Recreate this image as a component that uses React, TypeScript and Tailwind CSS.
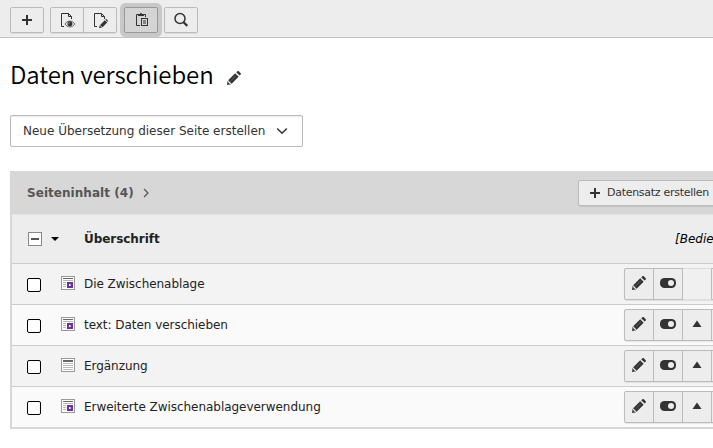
import type { ReactNode } from "react";
import clsx from "clsx";

type Row = {
  title: string;
  kind: "media" | "text";
  movable: boolean;
};

const ROWS: Row[] = [
  { title: "Die Zwischenablage", kind: "media", movable: false },
  { title: "text: Daten verschieben", kind: "media", movable: true },
  { title: "Ergänzung", kind: "text", movable: true },
  { title: "Erweiterte Zwischenablageverwendung", kind: "media", movable: true },
];

function PlusIcon({ className }: { className?: string }) {
  return (
    <svg viewBox="0 0 16 16" className={clsx("h-4 w-4 shrink-0", className)} fill="#333">
      <path d="M7 3h2v4h4v2H9v4H7V9H3V7h4z" />
    </svg>
  );
}

function PencilIcon({ className }: { className?: string }) {
  return (
    <svg viewBox="0 0 16 16" className={clsx("h-4 w-4 shrink-0", className)} fill="#333">
      <path d="M9.200 3.300 12.600 6.700 5.600 13.700 2.200 10.300z" />
      <path d="m10.300 2.400 1.100-1.100c.4-.4 1-.4 1.400 0l1.900 1.900c.4.4.4 1 0 1.400l-1 1z" />
      <path d="M1.700 10.600 2.500 12.500l.9.9 1.900.8L1 15z" />
      <path d="m4.700 10.900 5.200-5.100" stroke="#888" strokeWidth=".5" fill="none" />
    </svg>
  );
}

function ToggleIcon() {
  return (
    <svg viewBox="0 0 16 16" className="h-4 w-4 shrink-0">
      <rect y="3" width="16" height="10" rx="4.500" fill="#333" />
      <circle cx="11" cy="8" r="3" fill="#ededed" />
    </svg>
  );
}

function UpIcon() {
  return (
    <svg viewBox="0 0 16 16" className="h-4 w-4 shrink-0" fill="#333">
      <path d="M8 4.500 12.500 11h-9z" />
    </svg>
  );
}

function PageIcon({ children }: { children: ReactNode }) {
  return (
    <svg viewBox="0 0 16 16" className="h-4 w-4 shrink-0" fill="none">
      <path d="M5 14.500H2.500v-13H9.500L12.500 4.500V7" stroke="#333" />
      <path d="M9.500 1.500v3h3" stroke="#333" />
      {children}
    </svg>
  );
}

function ViewPageIcon() {
  return (
    <PageIcon>
      <path d="M6 12c1.200-1.900 2.800-2.900 4.900-2.900s3.600 1 4.800 2.900c-1.200 1.900-2.700 2.900-4.800 2.900S7.200 13.900 6 12z" stroke="#555" strokeWidth=".9" />
      <circle cx="10.900" cy="11.700" r="2.500" fill="#333" />
      <circle cx="10" cy="11" r=".6" fill="#ededed" />
    </PageIcon>
  );
}

function EditPageIcon() {
  return (
    <PageIcon>
      <path d="m12.800 8.300 2.400 2.200-4.700 4.700-2.400-2.200z" fill="#333" />
      <path d="m13.300 7.800 1-1 1.700 2.100-.5 1z" fill="#333" />
      <path d="m7.700 13.300 2.400 2.200-3 .4z" fill="#333" />
    </PageIcon>
  );
}

function ClipboardIcon() {
  return (
    <svg viewBox="0 0 16 16" className="h-4 w-4 shrink-0" fill="none">
      <path d="M7 13.500H3.500v-11H5M11 2.500h1.500V5" stroke="#333" />
      <path d="M5 2h2c0-1.300 2-1.300 2 0h2v2H5z" fill="#333" />
      <rect x="8.500" y="6.500" width="6" height="7" stroke="#333" />
      <path d="M10 9h3M10 11h3" stroke="#333" />
    </svg>
  );
}

function SearchIcon() {
  return (
    <svg viewBox="0 0 16 16" className="h-4 w-4 shrink-0" fill="none" stroke="#333">
      <circle cx="7" cy="6.500" r="5" strokeWidth="1.500" />
      <path d="m10.600 10.200 3.700 3.700" strokeWidth="2.200" />
    </svg>
  );
}

function RecordIcon({ kind }: { kind: Row["kind"] }) {
  return (
    <svg viewBox="0 0 14 14" className="h-3.5 w-3.5 shrink-0" shapeRendering="crispEdges">
      <rect x=".5" y=".5" width="13" height="13" fill="#fff" stroke="#999" />
      {kind === "media" ? (
        <>
          <path d="M2 2.500h10" stroke="#666" />
          <path d="M2 4.500h10M2 6.500h3M2 8.500h3M2 10.500h3" stroke="#b9b9b9" />
          <rect x="6" y="6" width="6" height="6" fill="#663399" />
          <path d="M8 8h1v2H8z" fill="#fff" />
          <path d="M9 8h1v2H9z" fill="#c2addb" />
        </>
      ) : (
        <>
          <path d="M2 3h10" stroke="#666" strokeWidth="2" />
          <path d="M2 5.500h10M2 7.500h10M2 9.500h10M2 11.500h10" stroke="#b9b9b9" />
        </>
      )}
    </svg>
  );
}

function ToolButton({ children, className }: { children: ReactNode; className?: string }) {
  return (
    <button
      className={clsx(
        "flex h-[26px] w-[34px] items-center justify-center border border-[#bbb] shadow-[0_1px_1px_rgba(0,0,0,0.08)]",
        className
      )}
    >
      {children}
    </button>
  );
}

function Toolbar() {
  return (
    <div className="flex h-[38px] shrink-0 items-start border-b border-[#c3c3c3] bg-[#ededed] pt-[7px] pl-2.5">
      <ToolButton className="rounded-xs">
        <PlusIcon />
      </ToolButton>
      <div className="ml-1.5 flex">
        <ToolButton className="rounded-l-xs">
          <ViewPageIcon />
        </ToolButton>
        <ToolButton className="-ml-px rounded-r-xs">
          <EditPageIcon />
        </ToolButton>
      </div>
      <button className="ml-[7px] flex h-[26px] w-[34px] items-center justify-center rounded-xs border border-[#999] bg-[#d4d4d4] shadow-[0_0_0_4px_#c8c8c8]">
        <ClipboardIcon />
      </button>
      <ToolButton className="ml-1.5 rounded-xs">
        <SearchIcon />
      </ToolButton>
    </div>
  );
}

function RowActions({ movable }: { movable: boolean }) {
  const cell = "flex w-[29px] shrink-0 items-center justify-center border-r border-[#bbb] pb-0.5";
  return (
    <div className="flex h-8 w-[118px] shrink-0 rounded-l-xs border border-[#bbb] bg-[#ededed] shadow-[0_1px_1px_rgba(0,0,0,0.08)]">
      <div className={cell}>
        <PencilIcon />
      </div>
      <div className={cell}>
        <ToggleIcon />
      </div>
      <div className={clsx(cell, !movable && "-my-px border-y border-y-[#ddd] bg-[#f0f0f0]")}>
        {movable && <UpIcon />}
      </div>
    </div>
  );
}

export default function App() {
  return (
    <div className="flex h-[448px] w-[713px] flex-col overflow-hidden bg-white font-['DejaVu_Sans',sans-serif] text-[12px] text-[#222]">
      <Toolbar />

      <div className="ml-2.5 flex h-[77px] shrink-0 items-center">
        <h1 className="mb-[5px] w-[216px] font-['Noto_Sans_CJK_SC',sans-serif] text-[24px] leading-[30px] font-[350] tracking-[-0.09px] whitespace-nowrap text-black">
          Daten verschieben
        </h1>
        <PencilIcon className="mt-0.5" />
      </div>

      <button className="ml-2.5 flex h-8 w-[293px] shrink-0 items-center rounded-xs border border-[#bbb] pl-3 whitespace-nowrap text-[#333] shadow-[inset_0_1px_1px_rgba(0,0,0,0.08)]">
        <span className="w-[251px] text-left">Neue Übersetzung dieser Seite erstellen</span>
        <svg viewBox="0 0 16 16" className="h-4 w-4 shrink-0" fill="none" stroke="#333" strokeWidth="1.500">
          <path d="m3.200 5.500 4.800 4.800 4.800-4.800" />
        </svg>
      </button>

      <div className="mt-6 ml-2.5 flex w-[760px] flex-col border-2 border-t-0 border-[#d7d7d7]">
        <div className="flex h-[43px] items-center bg-[#d7d7d7] pl-[15px] text-[#555]">
          <span className="w-[107px] font-bold tracking-[0.05px] whitespace-nowrap">Seiteninhalt (4)</span>
          <svg viewBox="0 0 8 12" className="ml-2 h-3 w-2" fill="none" stroke="#555" strokeWidth="1.200">
            <path d="m2 2 4 4-4 4" />
          </svg>
          <button className="ml-auto flex h-[26px] w-[190px] items-center rounded-xs border border-[#bbb] bg-[#ededed] pl-2 text-[11px] whitespace-nowrap text-[#333] shadow-[0_1px_1px_rgba(0,0,0,0.08)]">
            <PlusIcon />
            <span className="mt-0.5 ml-1 tracking-[-0.28px]">Datensatz erstellen</span>
          </button>
        </div>

        <div className="flex h-[50px] items-center border-t border-b border-t-[#e3e3e3] border-b-[#ccc] bg-[#ededed] pl-4">
          <svg viewBox="0 0 14 14" className="h-3.5 w-3.5 shrink-0" shapeRendering="crispEdges">
            <rect x=".5" y=".5" width="13" height="13" fill="#fff" stroke="#888" />
            <path d="M3 7h8" stroke="#555" strokeWidth="2" />
          </svg>
          <svg viewBox="0 0 8 4" className="ml-[9px] h-1 w-2 shrink-0">
            <path d="M0 0h8L4 4z" fill="#000" />
          </svg>
          <span className="ml-[25px] w-[591px] shrink-0 font-bold tracking-[-0.05px]">Überschrift</span>
          <em className="text-black">[Bedie</em>
        </div>

        {ROWS.map((row, i) => (
          <div
            key={row.title}
            className={clsx(
              "flex items-center pl-[15px]",
              i < ROWS.length - 1 ? "h-[41px] border-b border-[#ccc]" : "h-10",
              i % 2 === 0 ? "bg-[#f3f3f3]" : "bg-[#fafafa]"
            )}
          >
            <span className="mt-0.5 h-3.5 w-3.5 shrink-0 rounded-xs border border-black bg-white" />
            <span className="mr-[9px] mb-0.5 ml-5">
              <RecordIcon kind={row.kind} />
            </span>
            <span className="w-[540px] shrink-0 tracking-[-0.04px] whitespace-nowrap">{row.title}</span>
            <RowActions movable={row.movable} />
          </div>
        ))}
      </div>
    </div>
  );
}
